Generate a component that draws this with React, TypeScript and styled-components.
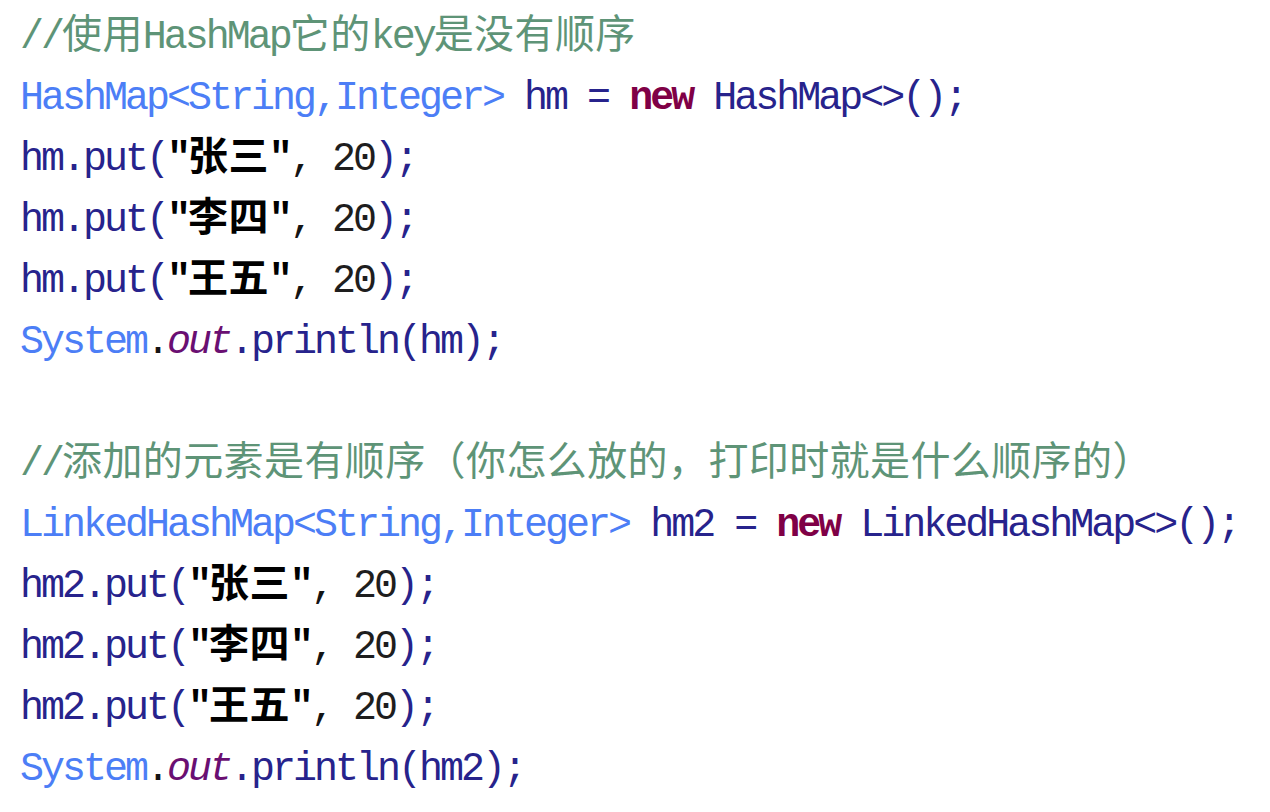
import React from "react";
import styled, { createGlobalStyle } from "styled-components";

const GlobalStyle = createGlobalStyle`
  html, body {
    margin: 0;
    padding: 0;
    background: #ffffff;
  }
  body {
    width: 1270px;
    height: 812px;
    overflow: hidden;
  }
`;

type Kind = "plain" | "comment" | "type" | "keyword" | "field" | "string" | "number" | "dark";

const palette: Record<Kind, string> = {
  plain: "#27238c",
  comment: "#5e9477",
  type: "#4c7ef6",
  keyword: "#7f0046",
  field: "#6a0f72",
  string: "#000000",
  number: "#1e1e1e",
  dark: "#141414",
};

const Code = styled.div`
  padding: 7px 0 0 20px;
  font-family: "Liberation Mono", "Courier New", monospace;
  font-size: 40px;
  letter-spacing: -3px;
  color: ${palette.plain};
`;

const Line = styled.div`
  height: 61px;
  line-height: 61px;
  white-space: pre;
`;

const Tok = styled.span<{ $kind: Kind }>`
  color: ${(p) => palette[p.$kind]};
  font-weight: ${(p) => (p.$kind === "keyword" || p.$kind === "string" ? 700 : 400)};
  font-style: ${(p) => (p.$kind === "field" ? "italic" : "normal")};
`;

const Han = styled.span<{ $bold: boolean }>`
  font-family: "Noto Sans CJK SC", "Noto Sans CJK TC", sans-serif;
  font-size: 40px;
  letter-spacing: 0.4px;
  line-height: 1;
  font-weight: ${(p) => (p.$bold ? 700 : 400)};
`;

type Token = [Kind, string];

const CJK = /([\u3000-\u303f\u3400-\u9fff\uff00-\uffef]+)/;

function Segment({ kind, text }: { kind: Kind; text: string }) {
  const parts = text.split(CJK).filter((s) => s.length > 0);
  return (
    <Tok $kind={kind}>
      {parts.map((part, i) =>
        CJK.test(part) ? (
          <Han key={i} $bold={kind === "string"}>
            {part}
          </Han>
        ) : (
          <React.Fragment key={i}>{part}</React.Fragment>
        )
      )}
    </Tok>
  );
}

const putLine = (target: string, name: string): Token[] => [
  ["plain", `${target}.put(`],
  ["string", `"${name}"`],
  ["dark", ", "],
  ["number", "20"],
  ["plain", ");"],
];

const printLine = (target: string): Token[] => [
  ["type", "System"],
  ["dark", "."],
  ["field", "out"],
  ["plain", `.println(${target});`],
];

const lines: Token[][] = [
  [["comment", "//使用HashMap它的key是没有顺序"]],
  [
    ["type", "HashMap<String,Integer>"],
    ["plain", " hm = "],
    ["keyword", "new"],
    ["plain", " HashMap<>();"],
  ],
  putLine("hm", "张三"),
  putLine("hm", "李四"),
  putLine("hm", "王五"),
  printLine("hm"),
  [],
  [["comment", "//添加的元素是有顺序（你怎么放的，打印时就是什么顺序的）"]],
  [
    ["type", "LinkedHashMap<String,Integer>"],
    ["plain", " hm2 = "],
    ["keyword", "new"],
    ["plain", " LinkedHashMap<>();"],
  ],
  putLine("hm2", "张三"),
  putLine("hm2", "李四"),
  putLine("hm2", "王五"),
  printLine("hm2"),
];

export default function App() {
  return (
    <>
      <GlobalStyle />
      <Code>
        {lines.map((tokens, i) => (
          <Line key={i}>
            {tokens.length === 0
              ? " "
              : tokens.map(([kind, text], j) => <Segment key={j} kind={kind} text={text} />)}
          </Line>
        ))}
      </Code>
    </>
  );
}
